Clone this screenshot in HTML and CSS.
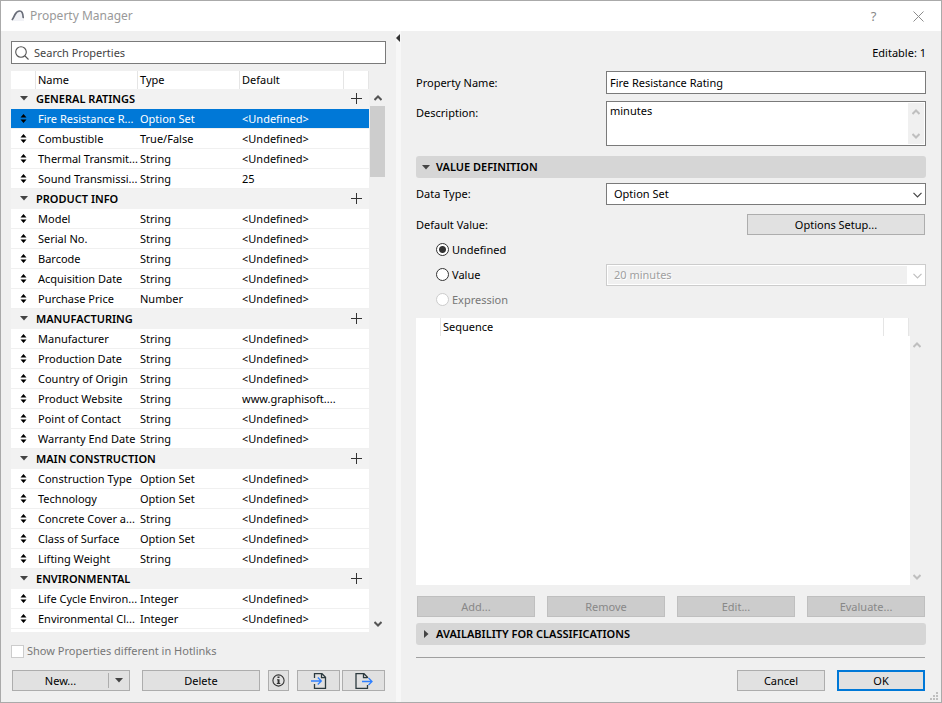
FILE: index.html
```html
<!DOCTYPE html>
<html lang="en">
<head>
    <meta charset="UTF-8">
    <meta name="viewport" content="width=device-width, initial-scale=1.0">
    <title>Property Manager</title>
    <link rel="stylesheet" href="styles.css">
</head>
<body>
    <!-- Shared icons -->
    <svg class="sprite" aria-hidden="true">
        <symbol id="sort" viewBox="0 0 7 9"><path d="M3.5 0 6.5 3.5h-6zM3.5 9 .5 5.5h6z"/></symbol>
        <symbol id="down" viewBox="0 0 8 5"><path d="M0 0h8L4 4.5z"/></symbol>
        <symbol id="right" viewBox="0 0 5 8"><path d="M0 0v8l4.5-4z"/></symbol>
        <symbol id="plus" viewBox="0 0 11 11"><path d="M5 0h1v5h5v1H6v5H5V6H0V5h5z"/></symbol>
        <symbol id="arrow-up" viewBox="0 0 8 6"><path d="M.5 5 4 1.5 7.5 5" fill="none" stroke="currentColor" stroke-width="2"/></symbol>
        <symbol id="arrow-down" viewBox="0 0 8 6"><path d="M.5 1 4 4.5 7.5 1" fill="none" stroke="currentColor" stroke-width="2"/></symbol>
        <symbol id="chevron" viewBox="0 0 9 6"><path d="M.5 .8 4.5 4.8 8.5 .8" fill="none" stroke="currentColor" stroke-width="1.2"/></symbol>
    </svg>

    <div class="window">
        <header class="titlebar">
            <svg class="logo" width="14" height="14" viewBox="0 0 14 14">
                <path d="M1 12C2 5 5 2 8.500 2 11.500 2 12.500 5 13 12z" fill="#f1f2f6"/>
                <path d="M1.300 10.500C2.300 9.500 3 7.500 4 5.500 5.200 3.200 6.800 2 8.800 2c2.400 0 3.200 2.500 3.400 6.500" fill="none" stroke="#686c78" stroke-width="1.700" stroke-linecap="round"/>
            </svg>
            <h1>Property Manager</h1>
            <button class="title-btn" aria-label="Help">?</button>
            <button class="title-btn" aria-label="Close">
                <svg width="11" height="11" viewBox="0 0 11 11"><path d="M.5 .5l10 10M10.500 .5l-10 10" stroke="#8c8c8c" stroke-width="1"/></svg>
            </button>
        </header>

        <main class="content">
            <section class="left-pane">
                <label class="search">
                    <svg width="14" height="14" viewBox="0 0 14 14"><circle cx="6" cy="6" r="5.300" fill="none" stroke="#555" stroke-width="1.100"/><path d="M10 10l3.500 3.500" stroke="#555" stroke-width="1.100"/></svg>
                    <input type="text" placeholder="Search Properties" aria-label="Search Properties">
                </label>

                <div class="list">
                    <div class="list-body">
                        <table class="properties">
                            <colgroup>
                                <col class="col-icon">
                                <col class="col-text">
                                <col class="col-text">
                                <col>
                                <col class="col-icon">
                            </colgroup>
                            <thead>
                                <tr><th></th><th>Name</th><th>Type</th><th>Default</th><th></th></tr>
                            </thead>
                            <tbody>
                                <tr class="group"><td><svg class="down"><use href="#down"/></svg></td><td colspan="3">GENERAL RATINGS</td><td><button class="add" aria-label="Add"><svg><use href="#plus"/></svg></button></td></tr>
                                <tr class="selected"><td><svg class="sort"><use href="#sort"/></svg></td><td>Fire Resistance R...</td><td>Option Set</td><td colspan="2">&lt;Undefined&gt;</td></tr>
                                <tr><td><svg class="sort"><use href="#sort"/></svg></td><td>Combustible</td><td>True/False</td><td colspan="2">&lt;Undefined&gt;</td></tr>
                                <tr><td><svg class="sort"><use href="#sort"/></svg></td><td>Thermal Transmit...</td><td>String</td><td colspan="2">&lt;Undefined&gt;</td></tr>
                                <tr><td><svg class="sort"><use href="#sort"/></svg></td><td>Sound Transmissi...</td><td>String</td><td colspan="2">25</td></tr>

                                <tr class="group"><td><svg class="down"><use href="#down"/></svg></td><td colspan="3">PRODUCT INFO</td><td><button class="add" aria-label="Add"><svg><use href="#plus"/></svg></button></td></tr>
                                <tr><td><svg class="sort"><use href="#sort"/></svg></td><td>Model</td><td>String</td><td colspan="2">&lt;Undefined&gt;</td></tr>
                                <tr><td><svg class="sort"><use href="#sort"/></svg></td><td>Serial No.</td><td>String</td><td colspan="2">&lt;Undefined&gt;</td></tr>
                                <tr><td><svg class="sort"><use href="#sort"/></svg></td><td>Barcode</td><td>String</td><td colspan="2">&lt;Undefined&gt;</td></tr>
                                <tr><td><svg class="sort"><use href="#sort"/></svg></td><td>Acquisition Date</td><td>String</td><td colspan="2">&lt;Undefined&gt;</td></tr>
                                <tr><td><svg class="sort"><use href="#sort"/></svg></td><td>Purchase Price</td><td>Number</td><td colspan="2">&lt;Undefined&gt;</td></tr>

                                <tr class="group"><td><svg class="down"><use href="#down"/></svg></td><td colspan="3">MANUFACTURING</td><td><button class="add" aria-label="Add"><svg><use href="#plus"/></svg></button></td></tr>
                                <tr><td><svg class="sort"><use href="#sort"/></svg></td><td>Manufacturer</td><td>String</td><td colspan="2">&lt;Undefined&gt;</td></tr>
                                <tr><td><svg class="sort"><use href="#sort"/></svg></td><td>Production Date</td><td>String</td><td colspan="2">&lt;Undefined&gt;</td></tr>
                                <tr><td><svg class="sort"><use href="#sort"/></svg></td><td>Country of Origin</td><td>String</td><td colspan="2">&lt;Undefined&gt;</td></tr>
                                <tr><td><svg class="sort"><use href="#sort"/></svg></td><td>Product Website</td><td>String</td><td colspan="2">www.graphisoft....</td></tr>
                                <tr><td><svg class="sort"><use href="#sort"/></svg></td><td>Point of Contact</td><td>String</td><td colspan="2">&lt;Undefined&gt;</td></tr>
                                <tr><td><svg class="sort"><use href="#sort"/></svg></td><td>Warranty End Date</td><td>String</td><td colspan="2">&lt;Undefined&gt;</td></tr>

                                <tr class="group"><td><svg class="down"><use href="#down"/></svg></td><td colspan="3">MAIN CONSTRUCTION</td><td><button class="add" aria-label="Add"><svg><use href="#plus"/></svg></button></td></tr>
                                <tr><td><svg class="sort"><use href="#sort"/></svg></td><td>Construction Type</td><td>Option Set</td><td colspan="2">&lt;Undefined&gt;</td></tr>
                                <tr><td><svg class="sort"><use href="#sort"/></svg></td><td>Technology</td><td>Option Set</td><td colspan="2">&lt;Undefined&gt;</td></tr>
                                <tr><td><svg class="sort"><use href="#sort"/></svg></td><td>Concrete Cover a...</td><td>String</td><td colspan="2">&lt;Undefined&gt;</td></tr>
                                <tr><td><svg class="sort"><use href="#sort"/></svg></td><td>Class of Surface</td><td>Option Set</td><td colspan="2">&lt;Undefined&gt;</td></tr>
                                <tr><td><svg class="sort"><use href="#sort"/></svg></td><td>Lifting Weight</td><td>String</td><td colspan="2">&lt;Undefined&gt;</td></tr>

                                <tr class="group"><td><svg class="down"><use href="#down"/></svg></td><td colspan="3">ENVIRONMENTAL</td><td><button class="add" aria-label="Add"><svg><use href="#plus"/></svg></button></td></tr>
                                <tr><td><svg class="sort"><use href="#sort"/></svg></td><td>Life Cycle Environ...</td><td>Integer</td><td colspan="2">&lt;Undefined&gt;</td></tr>
                                <tr><td><svg class="sort"><use href="#sort"/></svg></td><td>Environmental Cl...</td><td>Integer</td><td colspan="2">&lt;Undefined&gt;</td></tr>
                            </tbody>
                        </table>
                    </div>
                    <div class="scrollbar">
                        <svg class="arrow"><use href="#arrow-up"/></svg>
                        <div class="thumb"></div>
                        <svg class="arrow"><use href="#arrow-down"/></svg>
                    </div>
                </div>

                <label class="hotlinks">
                    <input type="checkbox" disabled>
                    <span>Show Properties different in Hotlinks</span>
                </label>

                <div class="toolbar">
                    <div class="split-btn">
                        <button class="split-main">New...</button>
                        <button class="split-menu" aria-label="More"><svg class="down"><use href="#down"/></svg></button>
                    </div>
                    <button class="btn delete-btn">Delete</button>
                    <button class="btn info-btn" aria-label="Info">
                        <svg width="13" height="13" viewBox="0 0 13 13"><circle cx="6.500" cy="6.500" r="5.600" fill="none" stroke="#333" stroke-width="1.100"/><path d="M5.500 2.500h2v1.500h-2zM5 5.200h2.500V9h.8v1H4.800V9h.8V6.200H5z" fill="#333"/></svg>
                    </button>
                    <div class="transfer">
                        <button class="btn" aria-label="Import">
                            <svg width="18" height="16" viewBox="0 0 18 16"><path d="M4.500 5V.7h7.500l3.500 3.500v11.100h-11V11M11.500 1v3.700h4" fill="none" stroke="#2c3a3f" stroke-width="1.300"/><path d="M1 8h10M7.800 4.500 11.300 8l-3.500 3.500" fill="none" stroke="#2f80ff" stroke-width="1.300"/></svg>
                        </button>
                        <button class="btn" aria-label="Export">
                            <svg width="18" height="16" viewBox="0 0 18 16"><path d="M12.500 5V4.200L9 .7H1v14.600h11.500V12M8.500 1v3.700h4" fill="none" stroke="#2c3a3f" stroke-width="1.300"/><path d="M7 8.500h10M13.500 5 17 8.500 13.500 12" fill="none" stroke="#2f80ff" stroke-width="1.300"/></svg>
                        </button>
                    </div>
                </div>
            </section>

            <div class="splitter">
                <svg width="4" height="8" viewBox="0 0 4 8"><path d="M4 0v8L0 4z" fill="#333"/></svg>
            </div>

            <section class="right-pane">
                <p class="editable">Editable: 1</p>

                <div class="form-row">
                    <label for="prop-name">Property Name:</label>
                    <input class="field" id="prop-name" type="text" value="Fire Resistance Rating">
                </div>
                <div class="form-row description">
                    <label for="prop-desc">Description:</label>
                    <div class="textarea-box">
                        <textarea id="prop-desc">minutes</textarea>
                        <div class="mini-scroll">
                            <svg class="arrow"><use href="#arrow-up"/></svg>
                            <svg class="arrow"><use href="#arrow-down"/></svg>
                        </div>
                    </div>
                </div>

                <h2 class="section-bar"><svg class="down"><use href="#down"/></svg>VALUE DEFINITION</h2>

                <div class="form-row">
                    <label for="data-type">Data Type:</label>
                    <div class="select-box">
                        <select id="data-type"><option>Option Set</option></select>
                        <svg class="chevron"><use href="#chevron"/></svg>
                    </div>
                </div>
                <div class="form-row default-row">
                    <span>Default Value:</span>
                    <button class="btn setup-btn">Options Setup...</button>
                </div>

                <div class="radio-row">
                    <label><input type="radio" name="default" checked>Undefined</label>
                </div>
                <div class="radio-row">
                    <label><input type="radio" name="default">Value</label>
                    <div class="select-box disabled">
                        <select aria-label="Value" disabled><option>20 minutes</option></select>
                        <svg class="chevron"><use href="#chevron"/></svg>
                    </div>
                </div>
                <div class="radio-row">
                    <label class="muted"><input type="radio" name="default" disabled>Expression</label>
                </div>

                <div class="sequence">
                    <div class="sequence-body">
                        <table class="properties">
                            <colgroup>
                                <col class="col-icon">
                                <col>
                                <col class="col-icon">
                                <col class="col-edge">
                            </colgroup>
                            <thead>
                                <tr><th></th><th>Sequence</th><th></th><th class="edge"></th></tr>
                            </thead>
                        </table>
                    </div>
                    <div class="scrollbar idle">
                        <svg class="arrow"><use href="#arrow-up"/></svg>
                        <svg class="arrow"><use href="#arrow-down"/></svg>
                    </div>
                </div>

                <div class="actions">
                    <button class="btn" disabled>Add...</button>
                    <button class="btn" disabled>Remove</button>
                    <button class="btn" disabled>Edit...</button>
                    <button class="btn" disabled>Evaluate...</button>
                </div>

                <h2 class="section-bar"><svg class="right"><use href="#right"/></svg>AVAILABILITY FOR CLASSIFICATIONS</h2>

                <footer class="footer">
                    <button class="btn">Cancel</button>
                    <button class="btn primary">OK</button>
                </footer>
            </section>
        </main>

        <svg class="grip" width="8" height="8" viewBox="0 0 8 8"><path d="M6 0h2v2H6zM3 3h2v2H3zM6 3h2v2H6zM0 6h2v2H0zM3 6h2v2H3zM6 6h2v2H6z" fill="#bfbfbf"/></svg>
    </div>
</body>
</html>
```

FILE: styles.css
```css
* {
    box-sizing: border-box;
}

body {
    margin: 0;
    font-family: "Noto Sans", "Open Sans", sans-serif;
    font-size: 11px;
    line-height: 16px;
    color: #000;
    background: #f0f0f0;
}

button,
input,
select,
textarea {
    font: inherit;
    color: inherit;
    margin: 0;
    padding: 0;
    border-radius: 0;
}

button {
    border: none;
    background: none;
}

svg {
    display: block;
    flex: none;
}

.sprite {
    position: absolute;
    width: 0;
    height: 0;
}

.window {
    position: relative;
    display: flex;
    flex-direction: column;
    min-height: 100vh;
    border: 1px solid #aaa;
}

/* Title bar */
.titlebar {
    display: flex;
    align-items: center;
    height: 30px;
    padding-left: 10px;
    background: #fff;
    color: #999;
}

.titlebar h1 {
    flex: 1;
    margin: 0 0 0 5px;
    font-size: 12px;
    font-weight: normal;
}

.title-btn {
    display: flex;
    align-items: center;
    justify-content: center;
    width: 45px;
    height: 30px;
    font-size: 13px;
    color: #888;
}

.content {
    display: flex;
    flex: 1;
}

/* Left pane */
.left-pane {
    display: flex;
    flex-direction: column;
    flex: 0 0 395px;
    padding: 10px 10px 11px;
}

.search {
    display: flex;
    align-items: center;
    gap: 5px;
    height: 23px;
    padding: 0 3px;
    border: 1px solid #7a7a7a;
    background: #fff;
}

.search input {
    flex: 1;
    border: none;
    outline: none;
    background: none;
}

.search input::placeholder {
    color: #444;
    opacity: 1;
}

.list {
    display: flex;
    flex: 1;
    margin-top: 7px;
}

.list-body {
    flex: 1;
    background: #fff;
}

.properties {
    width: 100%;
    table-layout: fixed;
    border-spacing: 0;
}

.col-icon {
    width: 25px;
}

.col-text {
    width: 102px;
}

.col-edge {
    width: 1px;
}

.properties th {
    height: 18px;
    padding: 0 0 0 2px;
    border-right: 1px solid #e5e5e5;
    font-weight: normal;
    text-align: left;
}

.properties .edge {
    padding: 0;
    border: none;
    background: #f0f0f0;
}

.properties td {
    height: 20px;
    padding: 0 0 0 2px;
    border-bottom: 1px solid #f0f0f0;
    white-space: nowrap;
}

.properties .selected td {
    background: #0078d7;
    background-clip: padding-box;
    color: #fff;
}

.properties .group td {
    padding: 0;
    border-color: #f2f2f2;
    background: #f2f2f2;
    font-weight: 600;
}

.sort {
    width: 7px;
    height: 9px;
    margin-left: 7px;
    fill: #000;
}

.down {
    width: 8px;
    height: 5px;
    fill: #444;
}

.right {
    width: 5px;
    height: 8px;
    fill: #444;
}

.group .down {
    margin-left: 9px;
}

.add {
    display: block;
    margin-left: 7px;
}

.add svg {
    width: 11px;
    height: 11px;
    fill: #333;
}

.scrollbar {
    display: flex;
    flex-direction: column;
    align-items: center;
    width: 17px;
    padding: 24px 0 5px;
    color: #555;
}

.arrow {
    width: 8px;
    height: 6px;
}

.scrollbar .arrow:last-child {
    margin-top: auto;
}

.thumb {
    width: 15px;
    height: 71px;
    margin-top: 5px;
    background: #cdcdcd;
}

.idle {
    width: 16px;
    padding-right: 2px;
    color: #bfbfbf;
}

.hotlinks {
    display: flex;
    align-items: center;
    gap: 3px;
    margin: 11px 0;
    color: #777;
}

.hotlinks input {
    appearance: none;
    width: 13px;
    height: 13px;
    border: 1px solid #ccc;
    background: #fff;
}

/* Buttons */
.btn,
.split-btn {
    display: flex;
    align-items: center;
    justify-content: center;
    height: 21px;
    border: 1px solid #adadad;
    background: #e1e1e1;
}

.btn:disabled {
    border-color: #bfbfbf;
    background: #ccc;
    color: #888;
}

.primary {
    border: 2px solid #0078d7;
}

.toolbar {
    display: flex;
    gap: 8px;
    padding: 0 1px;
}

.split-btn,
.delete-btn {
    width: 118px;
}

.delete-btn {
    margin-left: 4px;
}

.split-main {
    flex: 1;
}

.split-menu {
    display: flex;
    align-items: center;
    justify-content: center;
    width: 21px;
    height: 15px;
    border-left: 1px solid #adadad;
}

.info-btn {
    width: 21px;
}

.transfer {
    display: flex;
    flex: 1;
    gap: 2px;
}

.transfer .btn {
    flex: 1;
}

.splitter {
    width: 5px;
    padding-top: 3px;
    background: #f7f7f7;
}

/* Right pane */
.right-pane {
    display: flex;
    flex-direction: column;
    flex: 1;
    padding: 14px 15px 11px;
}

.editable {
    margin: 0 0 10px;
    text-align: right;
}

.form-row {
    display: grid;
    grid-template-columns: 190px 1fr;
    align-items: center;
}

.field {
    height: 23px;
    padding: 0 3px;
    border: 1px solid #7a7a7a;
    background: #fff;
}

.description {
    align-items: start;
    margin: 7px 0 10px;
}

.description label {
    padding-top: 4px;
}

.textarea-box {
    display: flex;
    height: 45px;
    padding: 1px;
    border: 1px solid #7a7a7a;
    background: #fff;
}

.textarea-box textarea {
    flex: 1;
    padding: 0 2px;
    border: none;
    outline: none;
    resize: none;
    overflow: hidden;
}

.mini-scroll {
    display: flex;
    flex-direction: column;
    justify-content: space-between;
    align-items: center;
    width: 16px;
    padding: 6px 0 5px;
    background: #f0f0f0;
    color: #bfbfbf;
}

.section-bar {
    display: flex;
    align-items: center;
    height: 22px;
    margin: 0 0 5px;
    padding-left: 6px;
    border-radius: 3px;
    background: #d6d6d6;
    font-size: 11px;
    font-weight: 600;
}

.section-bar svg {
    margin-right: 6px;
}

.section-bar .right {
    margin: 0 7px 0 2px;
}

.select-box {
    position: relative;
    width: 320px;
    height: 22px;
}

.form-row .select-box {
    width: 100%;
}

.select-box select {
    display: block;
    appearance: none;
    width: 100%;
    height: 100%;
    padding: 0 20px 0 7px;
    border: 1px solid #7a7a7a;
    background: #fff;
}

.chevron {
    position: absolute;
    top: 9px;
    right: 4px;
    width: 9px;
    height: 6px;
    color: #444;
    pointer-events: none;
}

.select-box.disabled select {
    border-color: #ccc;
    background: linear-gradient(#f0f0f0, #f0f0f0) 1px 1px / calc(100% - 19px) calc(100% - 2px) no-repeat #fff;
    color: #a0a0a0;
    opacity: 1;
    text-shadow: 1px 1px #fff;
}

.disabled .chevron {
    color: #bfbfbf;
}

.default-row {
    margin: 9px 0 2px;
}

.setup-btn {
    justify-self: end;
    width: 178px;
    margin-right: 1px;
}

.radio-row {
    display: flex;
    align-items: center;
    justify-content: space-between;
    height: 25px;
    padding-left: 20px;
}

.radio-row label {
    display: flex;
    align-items: center;
    gap: 3px;
}

.radio-row input {
    appearance: none;
    width: 13px;
    height: 13px;
    border: 1px solid #333;
    border-radius: 50%;
    background: #fff;
}

.radio-row input:checked {
    background: radial-gradient(circle, #333 3px, #fff 4px);
}

.radio-row input:disabled {
    border-color: #ccc;
}

.muted {
    color: #777;
}

.sequence {
    display: flex;
    flex: 1;
    margin-top: 6px;
}

.sequence-body {
    flex: 1;
    background: #fff;
}

.actions {
    display: grid;
    grid-template-columns: repeat(4, 1fr);
    gap: 12px;
    margin: 11px 1px 6px;
}

.footer {
    display: flex;
    justify-content: flex-end;
    gap: 12px;
    margin: 7px 1px 0 0;
    padding-top: 12px;
    border-top: 1px solid #a0a0a0;
}

.footer .btn {
    width: 88px;
}

/* Resize grip in the window corner */
.grip {
    position: absolute;
    right: 3px;
    bottom: 2px;
}
```
